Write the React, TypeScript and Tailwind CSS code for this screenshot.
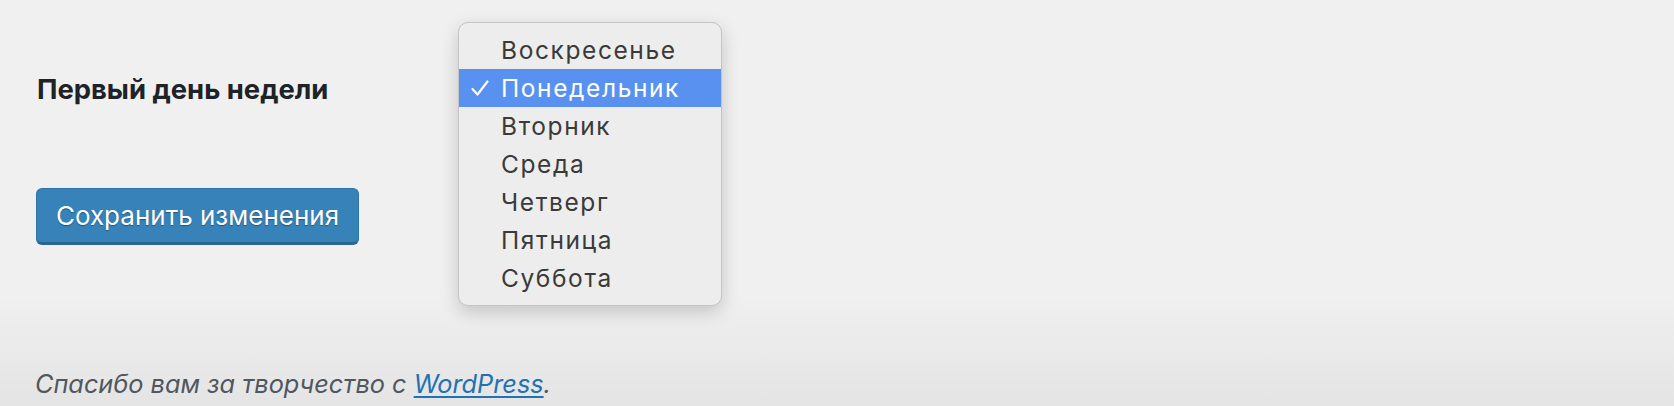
import React from "react";

const days = ["Воскресенье", "Понедельник", "Вторник", "Среда", "Четверг", "Пятница", "Суббота"];

export default function App() {
  return (
    <div
      className="relative w-[1674px] h-[406px] overflow-hidden bg-[#f0f0f1]"
      style={{ fontFamily: "Inter, 'Noto Sans', sans-serif" }}
    >
      <div className="absolute inset-x-0 bottom-0 h-[110px] bg-gradient-to-b from-[#f0f0f1] to-[#e4e4e4]" />
      <div className="relative flex flex-col pl-[37px] pt-[73px]">
        <div className="h-[32px] text-[27.4px] leading-[32px] font-bold text-[#1d2327]">
          Первый день недели
        </div>
        <div className="mt-[83px] flex">
          <button className="h-[57px] w-[323px] rounded-[6px] bg-[#3782b8] border border-[#2f74a8] border-b-[3px] border-b-[#2a6595] text-white text-[26px] leading-[32px] [text-shadow:0_1px_1px_rgba(0,0,0,0.35)] -ml-[1px]">
            Сохранить изменения
          </button>
        </div>
        <div className="mt-[123px] -ml-[2px] h-[32px] text-[25.3px] leading-[32px] italic text-[#50575e]">
          Спасибо вам за творчество с{" "}
          <a className="text-[#2271b1] underline underline-offset-[3px]">WordPress</a>.
        </div>
      </div>

      <div className="absolute left-[458px] top-[22px] w-[264px] rounded-[10px] border border-[#c4c4c4] bg-[#ededed] py-[8px] shadow-[0_6px_18px_rgba(0,0,0,0.18)]">
        {days.map((d, i) => {
          const sel = i === 1;
          return (
            <div
              key={d}
              className={
                "relative flex h-[38px] items-center pl-[42px] text-[24.5px] tracking-[1.6px] " +
                (sel ? "bg-[#5891ef] text-white" : "text-[#3a3a3a]")
              }
            >
              {sel && (
                <svg
                  className="absolute left-[12px] top-[11px]"
                  width="18"
                  height="16"
                  viewBox="0 0 18 16"
                  fill="none"
                >
                  <path d="M1.5 9 L6.5 14.5 L16.5 1.5" stroke="white" strokeWidth="2.2" strokeLinecap="round" strokeLinejoin="round" />
                </svg>
              )}
              {d}
            </div>
          );
        })}
      </div>
    </div>
  );
}
